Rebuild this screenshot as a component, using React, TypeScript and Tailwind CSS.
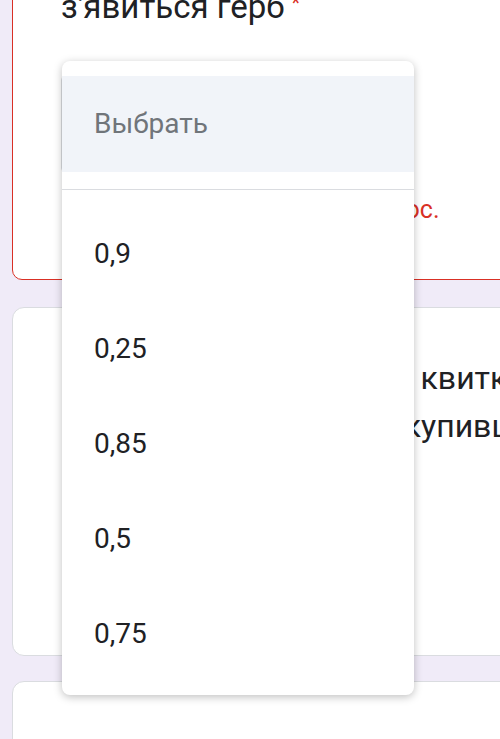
import React from 'react';

const OPTIONS = ['0,9', '0,25', '0,85', '0,5', '0,75'];

const App: React.FC = () => {
  return (
    <div
      className="relative w-[500px] h-[739px] overflow-hidden bg-[#f0ebf8]"
      style={{ fontFamily: 'Roboto, "Noto Sans", sans-serif' }}
    >
      <div className="pl-3 -mt-[40px]">
        {/* Question card with error */}
        <div className="w-[540px] rounded-[10px] border-[1.5px] border-[#d93025] bg-white pl-[48px] pt-[26px] pb-[53px]">
          <div className="flex items-start text-[33px] leading-[40px] text-[#202124] whitespace-nowrap">
            <span>з'явиться герб</span>
            <span className="ml-[7px] text-[20px] leading-[32px] text-[#d93025]">*</span>
          </div>
          <div className="mt-[49px] h-[96px] w-[260px] rounded border border-[#dadce0]" />
          <div className="mt-[22px] flex items-center text-[25px] leading-[32px] text-[#d93025] whitespace-nowrap">
            <span className="ml-[12px] flex h-[24px] w-[24px] items-center justify-center rounded-full bg-[#d93025] text-[16px] font-bold text-white">!</span>
            <span className="ml-[28px]">Это обязательный вопрос.</span>
          </div>
        </div>

        {/* Next question card */}
        <div className="mt-[27px] w-[540px] rounded-[12px] border border-[#dadce0] bg-white pl-[49px] pt-[46px] pb-[63px]">
          <div className="text-[32px] leading-[48px] text-[#202124] whitespace-nowrap">
            <div>
              У грошовій лотереї 100 <span className="pl-[4px]">квитків,</span>
            </div>
            <div>з яких 200 виграшних, купивши</div>
          </div>
          <div className="mt-[47px] h-[95px] w-[260px] rounded border border-[#bdc1c6]" />
        </div>

        {/* Third card */}
        <div className="mt-[25px] h-[200px] w-[540px] rounded-[12px] border border-[#dadce0] bg-white" />
      </div>

      {/* Open dropdown menu */}
      <div className="absolute left-[62px] top-[61px] w-[352px] rounded-[8px] bg-white pt-[15px] pb-[14px] shadow-[0_2px_8px_rgba(0,0,0,0.25)]">
        <div className="flex h-[96px] items-center bg-[#f1f4f9] pl-[32px] text-[28px] text-[#70757a]">
          Выбрать
        </div>
        <div className="mt-[17px] h-px bg-[#dadce0]" />
        <div className="pt-[16px]">
          {OPTIONS.map(opt => (
            <div key={opt} className="flex h-[95px] items-center pl-[32px] text-[28px] text-[#202124]">
              {opt}
            </div>
          ))}
        </div>
      </div>
    </div>
  );
};

export default App;
